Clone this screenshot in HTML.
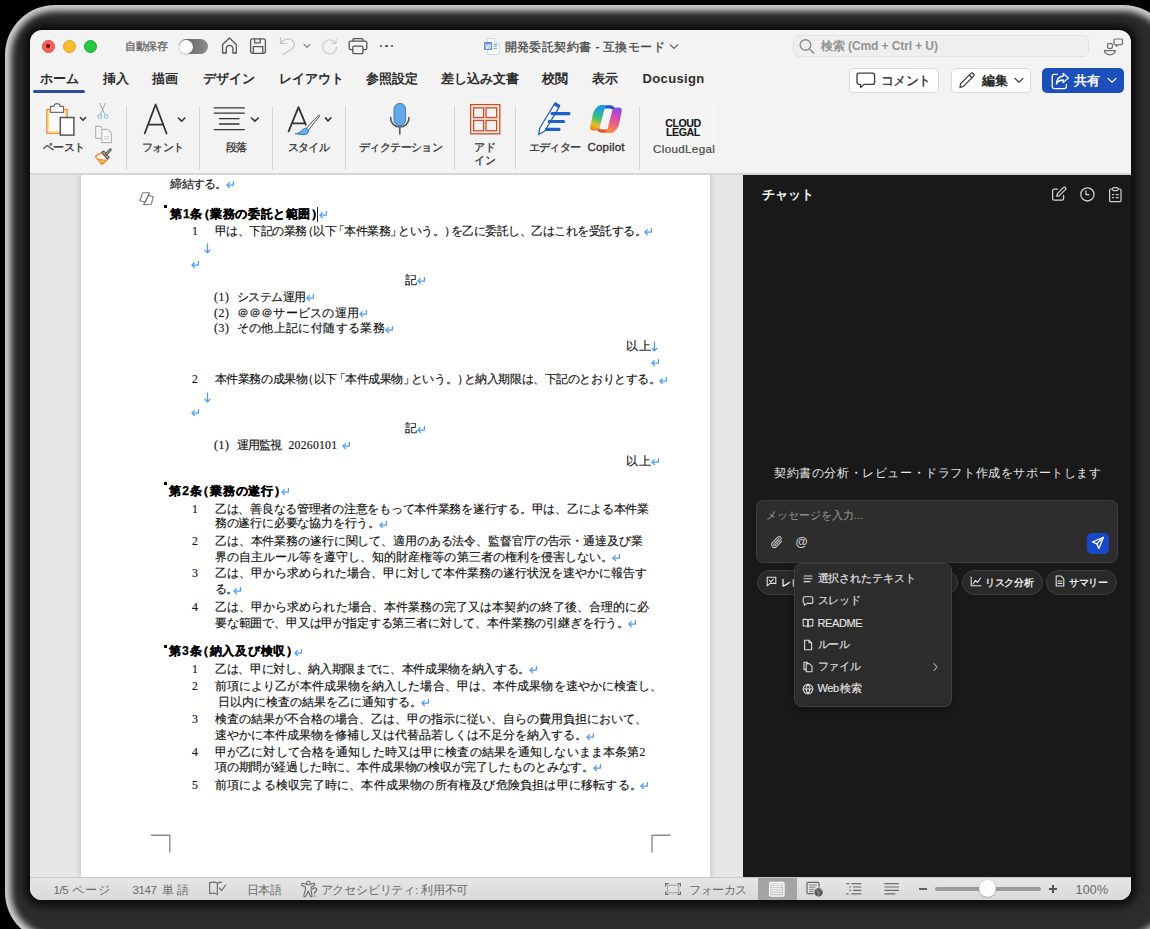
<!DOCTYPE html>
<html><head><meta charset="utf-8">
<style>
*{margin:0;padding:0;box-sizing:border-box}
html,body{width:1150px;height:929px;overflow:hidden;background:#000;font-family:"Liberation Sans",sans-serif}
.a{position:absolute}
#halo{left:5px;top:5px;width:1168px;height:937px;border-radius:50px;background:#2c2c2c;box-shadow:inset 0 0 6px 6px #d0d0d0}
#core{left:30px;top:30px;width:1101px;height:870px;border-radius:12px;box-shadow:0 0 9px 6px #0c0c0c}
#win{left:30px;top:30px;width:1101px;height:870px;border-radius:12px;overflow:hidden;background:#f3f3f3}
#doc{left:0;top:144px;width:713px;height:703px;background:#e7e7e7;overflow:hidden}
#page{left:51px;top:0;width:629px;height:703px;background:#fff;box-shadow:0 0 5px 1px rgba(0,0,0,.16)}
#chat{left:713px;top:144px;width:388px;height:703px;background:#191919}
#status{left:0;top:847px;width:1101px;height:23px;background:linear-gradient(#e6e6e6,#d9d9d9);border-top:1px solid #c9c9c9}
.t{position:absolute;white-space:nowrap;line-height:1}
.sep{top:105.5px;width:1px;height:64.5px;background:#d6d6d6}
.rl{font-size:10.5px;letter-spacing:-0.6px;color:#333;text-align:justify;text-align-last:justify;-webkit-text-stroke:0.3px #333}
.dl{position:absolute;white-space:nowrap;font-family:"Liberation Serif",serif;font-size:11.8px;letter-spacing:-0.8px;line-height:16px;color:#111;-webkit-text-stroke:0.15px #111;text-align:justify;text-align-last:justify;overflow:visible}
.db{font-weight:bold;color:#000;font-family:"Liberation Sans",sans-serif;font-size:12.2px;-webkit-text-stroke:0.25px #000}
.nj{text-align:left;text-align-last:auto;width:auto!important}
.pill{top:569.5px;height:25px;border-radius:13px;background:#292929;border:1px solid #3e3e3e}
.pt{font-size:10px;letter-spacing:-0.3px;font-weight:bold;color:#e8e8e8;margin-top:1.2px}
.mi{font-size:11px;letter-spacing:-0.4px;color:#e2e2e2;-webkit-text-stroke:0.15px #e2e2e2;text-align:justify;text-align-last:justify}
.st{font-size:11.5px;color:#6a6a6a;text-align:justify;text-align-last:justify;letter-spacing:-0.4px}
.ob{margin-left:-0.42em}.cb{margin-right:-0.42em}.ob2{margin-left:-0.3em}.cb2{margin-right:-0.3em}
.tab{font-size:13px;font-weight:bold;color:#2e2e2e;text-align:justify;text-align-last:justify}
</style></head><body>
<div id="halo" class="a"></div>
<div id="core" class="a"></div>
<div id="win" class="a">
  <div id="doc" class="a">
    <div id="page" class="a"></div>
  </div>
  <div id="chat" class="a"></div>
  <div id="status" class="a"></div>
</div>

<div class="a" id="ui" style="left:0;top:0;width:1150px;height:929px">
<!-- traffic lights -->
<div class="a" style="left:41.5px;top:39.5px;width:13px;height:13px;border-radius:50%;background:#ff5f57;border:0.5px solid #e2463f"></div>
<div class="a" style="left:46px;top:44px;width:4px;height:4px;border-radius:50%;background:#5a0a05"></div>
<div class="a" style="left:62.8px;top:39.5px;width:13px;height:13px;border-radius:50%;background:#febc2e;border:0.5px solid #dfa023"></div>
<div class="a" style="left:84px;top:39.5px;width:13px;height:13px;border-radius:50%;background:#28c840;border:0.5px solid #1aab29"></div>
<div class="t" style="left:125.3px;top:40.5px;font-size:10.5px;color:#666;letter-spacing:-0.5px;width:41.2px;text-align:justify;text-align-last:justify;-webkit-text-stroke:0.3px #666">自動保存</div>
<div class="a" style="left:178.5px;top:39px;width:29.5px;height:15px;border-radius:8px;background:linear-gradient(90deg,#5c5c5c,#8c8c8c)"></div>
<div class="a" style="left:179px;top:39.5px;width:14px;height:14px;border-radius:50%;background:#fff;box-shadow:0 0.5px 1px rgba(0,0,0,.35)"></div>
<svg class="a" style="left:220px;top:36px" width="20" height="20" viewBox="0 0 20 20" fill="none" stroke="#555" stroke-width="1.3" stroke-linejoin="round"><path d="M2.6 8.5 L9.4 2 L16.3 8.5 V17 H12.9 V12.6 A3.3 3.3 0 0 0 6.3 12.6 V17 H2.6 Z"/></svg>
<svg class="a" style="left:249px;top:37px" width="18" height="18" viewBox="0 0 18 18" fill="none" stroke="#555" stroke-width="1.3" stroke-linejoin="round"><rect x="1.6" y="1.8" width="14.8" height="14.5" rx="2"/><path d="M5.6 1.8 V5.8 H11.2 V1.8"/><path d="M4.3 16.3 V9.6 H13.8 V16.3"/></svg>
<svg class="a" style="left:278px;top:36px" width="20" height="20" viewBox="0 0 20 20" fill="none" stroke="#c2c2c2" stroke-width="1.2" stroke-linecap="round" stroke-linejoin="round"><path d="M2.5 7.5 H8.2 M2.5 7.5 V1.8"/><path d="M2.6 7.4 C5 3 11 1.6 14.6 4.5 C17.6 7.2 16.5 10.5 14 13 L5 18.5"/></svg>
<svg class="a" style="left:302px;top:42px" width="10" height="8" viewBox="0 0 10 8" fill="none" stroke="#8a8a8a" stroke-width="1.2" stroke-linecap="round"><path d="M2 2.5 L5 5.5 L8 2.5"/></svg>
<svg class="a" style="left:320px;top:37px" width="19" height="19" viewBox="0 0 19 19" fill="none" stroke="#cdcdcd" stroke-width="1.2" stroke-linecap="round"><path d="M15.8 6.5 A7 7 0 1 0 16.6 10"/><path d="M16.2 1.8 V6.3 H11.8"/></svg>
<svg class="a" style="left:348px;top:37px" width="20" height="18" viewBox="0 0 20 18" fill="none" stroke="#555" stroke-width="1.3" stroke-linejoin="round"><path d="M5 4.2 V2.6 A1 1 0 0 1 6 1.6 H14 A1 1 0 0 1 15 2.6 V4.2"/><path d="M5 12.6 H2.6 A1.4 1.4 0 0 1 1.2 11.2 V5.6 A1.4 1.4 0 0 1 2.6 4.2 H17.4 A1.4 1.4 0 0 1 18.8 5.6 V11.2 A1.4 1.4 0 0 1 17.4 12.6 H15"/><rect x="4.8" y="9.2" width="10.2" height="7.4" rx="1.3"/></svg>
<div class="a" style="left:379.6px;top:44.6px;width:2.6px;height:2.6px;border-radius:50%;background:#444"></div>
<div class="a" style="left:385.2px;top:44.6px;width:2.6px;height:2.6px;border-radius:50%;background:#444"></div>
<div class="a" style="left:390.8px;top:44.6px;width:2.6px;height:2.6px;border-radius:50%;background:#444"></div>
<!-- word icon -->
<svg class="a" style="left:483px;top:37px" width="18" height="19" viewBox="0 0 18 19"><path d="M4.5 1.5 H11.5 L16.5 6.5 V17.5 H4.5 Z" fill="#fff" stroke="#cfcfcf" stroke-width="0.8"/><path d="M11.5 1.5 V6.5 H16.5" fill="#f0f0f0" stroke="#cfcfcf" stroke-width="0.6"/><rect x="1" y="5" width="8.2" height="8" rx="0.6" fill="#6a93d8"/><text x="5.1" y="11.6" font-size="6.5" font-family="Liberation Sans" font-weight="bold" fill="#fff" text-anchor="middle">W</text><path d="M10.5 7.4 H14 M10.5 9.3 H14 M10.5 11.4 H14" stroke="#5aa0e8" stroke-width="1"/></svg>
<div class="t" style="left:504.5px;top:40.5px;font-size:12px;color:#4a4a4a;letter-spacing:-0.3px;width:160px;text-align:justify;text-align-last:justify;-webkit-text-stroke:0.3px #4a4a4a">開発委託契約書 - 互換モード</div>
<svg class="a" style="left:668px;top:42px" width="12" height="9" viewBox="0 0 12 9" fill="none" stroke="#6a6a6a" stroke-width="1.2" stroke-linecap="round"><path d="M2.2 2.8 L6 6.4 L9.8 2.8"/></svg>
<!-- search -->
<div class="a" style="left:793px;top:35px;width:296px;height:22px;border-radius:6px;background:#efefef;border:1px solid #e3e3e3"></div>
<svg class="a" style="left:798px;top:38px" width="18" height="17" viewBox="0 0 18 17" fill="none" stroke="#8a8a8a" stroke-width="1.4" stroke-linecap="round"><circle cx="7.5" cy="7" r="5.3"/><path d="M11.4 10.9 L15.8 15.2"/></svg>
<div class="t" style="left:821px;top:40px;font-size:12px;color:#939393;font-weight:bold;letter-spacing:-0.1px">検索 (Cmd + Ctrl + U)</div>
<svg class="a" style="left:1102px;top:36px" width="22" height="21" viewBox="0 0 22 21" fill="none" stroke="#707070" stroke-width="1.2" stroke-linejoin="round"><circle cx="8" cy="10" r="2.6"/><path d="M2.4 14.6 H13.4 A5.5 4.2 0 0 1 2.4 14.6 Z"/><path d="M13 3 H19.5 A1 1 0 0 1 20.5 4 V7.6 A1 1 0 0 1 19.5 8.6 H16.6 L14.4 10.4 V8.6 H13 A1 1 0 0 1 12 7.6 V4 A1 1 0 0 1 13 3 Z"/></svg>

<!-- tabs -->
<div class="t tab" style="left:39.7px;top:71.5px;width:37.3px">ホーム</div>
<div class="t tab" style="left:103px;top:71.5px;width:25.0px">挿入</div>
<div class="t tab" style="left:152.4px;top:71.5px;width:25.4px">描画</div>
<div class="t tab" style="left:202.9px;top:71.5px;width:49.1px">デザイン</div>
<div class="t tab" style="left:278.7px;top:71.5px;width:60.9px">レイアウト</div>
<div class="t tab" style="left:365.7px;top:71.5px;width:50.3px">参照設定</div>
<div class="t tab" style="left:441px;top:71.5px;width:75.7px">差し込み文書</div>
<div class="t tab" style="left:541.7px;top:71.5px;width:25.1px">校閲</div>
<div class="t tab" style="left:591.5px;top:71.5px;width:25.0px">表示</div>
<div class="t tab" style="left:642.6px;top:71.5px;width:60.9px;letter-spacing:0.35px">Docusign</div>
<div class="a" style="left:33px;top:89.5px;width:52px;height:3px;border-radius:1.5px;background:#2a4f9b"></div>

<div class="a" style="left:848.5px;top:67.5px;width:90px;height:25px;border-radius:5px;background:#fff;border:1px solid #dadada"></div>
<svg class="a" style="left:855px;top:71px" width="22" height="19" viewBox="0 0 22 19" fill="none" stroke="#3a3a3a" stroke-width="1.3" stroke-linejoin="round"><path d="M4 2.2 H17.6 A2 2 0 0 1 19.6 4.2 V11.4 A2 2 0 0 1 17.6 13.4 H9 L5.6 16.6 V13.4 H4 A2 2 0 0 1 2 11.4 V4.2 A2 2 0 0 1 4 2.2 Z"/></svg>
<div class="t" style="left:880.5px;top:73.5px;font-size:13px;color:#2a2a2a;width:50px;letter-spacing:-0.5px;text-align:justify;text-align-last:justify;-webkit-text-stroke:0.3px #2a2a2a">コメント</div>
<div class="a" style="left:950.5px;top:67.5px;width:80px;height:25px;border-radius:5px;background:#fff;border:1px solid #dadada"></div>
<svg class="a" style="left:957px;top:71px" width="20" height="19" viewBox="0 0 20 19" fill="none" stroke="#3a3a3a" stroke-width="1.3" stroke-linejoin="round"><path d="M3 16.5 L3.6 12.6 L13.6 2.6 A1.9 1.9 0 0 1 16.4 5.4 L6.4 15.4 Z"/><path d="M12.2 4 L15 6.8"/></svg>
<div class="t" style="left:981.5px;top:73.5px;font-size:13px;color:#2a2a2a;font-weight:bold;width:26px;text-align:justify;text-align-last:justify">編集</div>
<svg class="a" style="left:1013px;top:76px" width="12" height="9" viewBox="0 0 12 9" fill="none" stroke="#3a3a3a" stroke-width="1.3" stroke-linecap="round"><path d="M2 2.4 L6 6.2 L10 2.4"/></svg>
<div class="a" style="left:1042px;top:67.5px;width:81.5px;height:25px;border-radius:5px;background:#1c4fba"></div>
<svg class="a" style="left:1050px;top:70.5px" width="21" height="20" viewBox="0 0 21 20" fill="none" stroke="#fff" stroke-width="1.3" stroke-linejoin="round" stroke-linecap="round"><path d="M7.2 3.4 H4.2 A2 2 0 0 0 2.2 5.4 V15.6 A2 2 0 0 0 4.2 17.6 H14.4 A2 2 0 0 0 16.4 15.6 V13.4"/><path d="M13.2 2.4 L18.4 7 L13.2 11.6 V9 C10 9 7.6 10.4 6.4 13 C6.6 8.6 9.2 5.4 13.2 5 Z"/></svg>
<div class="t" style="left:1074px;top:73.5px;font-size:13px;color:#fff;font-weight:bold;width:26px;text-align:justify;text-align-last:justify">共有</div>
<svg class="a" style="left:1106px;top:76px" width="12" height="9" viewBox="0 0 12 9" fill="none" stroke="#fff" stroke-width="1.3" stroke-linecap="round"><path d="M2 2.4 L6 6.2 L10 2.4"/></svg>

<!-- ribbon -->
<div class="a" style="left:30px;top:173px;width:1101px;height:1.5px;background:#d6d6d6"></div>
<div class="a sep" style="left:125.5px"></div><div class="a sep" style="left:199px"></div><div class="a sep" style="left:272px"></div><div class="a sep" style="left:345px"></div><div class="a sep" style="left:453.5px"></div><div class="a sep" style="left:515px"></div><div class="a sep" style="left:639px"></div>
<svg class="a" style="left:40px;top:98px" width="80" height="72" viewBox="0 0 80 72">
 <rect x="6.9" y="11.6" width="20.2" height="23.6" fill="#fff" stroke="#f08a2c" stroke-width="1.4"/>
 <path d="M8.6 13.6 H25.4 V33.6 H8.6 Z" fill="none" stroke="#fddc8a" stroke-width="1.4"/>
 <rect x="9.8" y="13.4" width="14.6" height="19.6" fill="#fafafa"/>
 <path d="M10.5 8.4 H13.9 C14.3 5.6 15.6 5.6 17 5.6 C18.4 5.6 19.7 5.6 20.1 8.4 H23.5 V14.4 H10.5 Z" fill="#fff" stroke="#707070" stroke-width="1.2" stroke-linejoin="round"/>
 <rect x="20.3" y="19.5" width="13.6" height="17.6" fill="#fff" stroke="#555" stroke-width="1.5"/>
 <path d="M40.4 19.6 L43 22.3 L45.6 19.6" fill="none" stroke="#333" stroke-width="1.5" stroke-linecap="round" stroke-linejoin="round"/>
 <path d="M59.5 5 L64.6 16 M65.6 5 L60.5 16" stroke="#9a9a9a" stroke-width="0.9" fill="none"/>
 <circle cx="59.9" cy="18.4" r="1.8" fill="none" stroke="#8cc0e8" stroke-width="1.1"/><circle cx="66.2" cy="18.4" r="1.8" fill="none" stroke="#8cc0e8" stroke-width="1.1"/>
 <path d="M62 40.4 H55.6 V28.4 H60.2 L62 30.2" fill="none" stroke="#b5b5b5" stroke-width="1.1"/>
 <path d="M61.8 31.4 H67.6 L71.4 35.2 V44.6 H61.8 Z" fill="#f7f7f7" stroke="#b5b5b5" stroke-width="1.1"/>
 <path d="M63.8 38.6 H69.4 M63.8 40.8 H69.4" stroke="#c8c8c8" stroke-width="0.8"/>
 <path d="M55.4 58.4 L61.7 54.6 L67.4 61.4 L62 66.3 Z" fill="#fff" stroke="#f0862a" stroke-width="1.3" stroke-linejoin="round"/>
 <path d="M57.6 61.2 L66.4 62.3 L62 66 Z" fill="#f7c35a" stroke="#f0862a" stroke-width="1.1" stroke-linejoin="round"/>
 <path d="M62 54.3 L63.8 53 L69.2 59.3 L67.4 61 Z" fill="#bbb" stroke="#555" stroke-width="1.1" stroke-linejoin="round"/>
 <path d="M66.2 56.2 L70.4 51.8" stroke="#555" stroke-width="2.8" stroke-linecap="round"/>
 <path d="M66.4 56 L70.3 52" stroke="#ccc" stroke-width="0.9" stroke-linecap="round"/>
</svg>
<div class="t rl" style="left:43px;top:142px;width:39.5px">ペースト</div>
<svg class="a" style="left:135px;top:98px" width="60" height="42" viewBox="0 0 60 42" fill="none" stroke="#333" stroke-width="1.8" stroke-linecap="round" stroke-linejoin="round">
 <path d="M9.7 35.5 L20.6 6.5 L31.6 35.5"/><path d="M14 26.6 H27.4"/>
 <path d="M43.3 20 L46.7 23.2 L49.8 20" stroke-width="1.6"/>
</svg>
<div class="t rl" style="left:142px;top:142px;width:39px">フォント</div>
<svg class="a" style="left:205px;top:98px" width="60" height="42" viewBox="0 0 60 42" fill="none" stroke="#333" stroke-width="1.3" stroke-linecap="round">
 <path d="M9.2 9.9 H39.3 M9.2 15.1 H39.3 M14.4 20.7 H34 M14.4 26 H34 M9.2 31.6 H39.3"/>
 <path d="M46.5 20 L49.9 23.2 L53.3 20" stroke-width="1.6" stroke-linejoin="round"/>
</svg>
<div class="t rl" style="left:225.5px;top:142px;width:20.5px">段落</div>
<svg class="a" style="left:280px;top:98px" width="60" height="42" viewBox="0 0 60 42" fill="none" stroke-linecap="round" stroke-linejoin="round">
 <path d="M8.6 33.4 L18.5 9.1 L25.8 26.6" stroke="#333" stroke-width="1.8"/><path d="M13.3 25.3 H25.2" stroke="#333" stroke-width="1.8"/>
 <path d="M26.2 30.8 C30 26 35.5 20 38.4 17.6 C39.6 16.8 40 17.6 39.2 18.8 C36.5 22 32 27 28.4 32.4 Z" fill="#fff" stroke="#333" stroke-width="0.9"/>
 <path d="M15.4 35.6 C20 36.4 27.8 38.4 28.6 33 C28.4 30.8 26.4 29.6 24.6 30.4 C21.8 31.6 20.6 35.4 15.4 35.6 Z" fill="#6aaae6" stroke="#2a6fc0" stroke-width="0.9"/>
 <path d="M45.4 19.8 L48 23 L50.9 19.8" stroke="#333" stroke-width="1.6"/>
</svg>
<div class="t rl" style="left:287.5px;top:142px;width:41px">スタイル</div>
<svg class="a" style="left:385px;top:98px" width="30" height="42" viewBox="0 0 30 42" fill="none">
 <rect x="9" y="5.4" width="11.6" height="22.2" rx="5.8" fill="#64a8e8" stroke="#3b7cc8" stroke-width="1"/>
 <path d="M5.6 19.6 C5.6 32 24 32 24 19.6" stroke="#555" stroke-width="1.5" stroke-linecap="round"/>
 <path d="M14.8 29.6 V36.4" stroke="#555" stroke-width="1.6"/>
</svg>
<div class="t rl" style="left:359px;top:142px;width:81.5px">ディクテーション</div>
<svg class="a" style="left:465px;top:98px" width="40" height="42" viewBox="0 0 40 42" fill="none" stroke="#d24b22" stroke-width="1.3">
 <rect x="5.6" y="6.6" width="29.2" height="29.2"/>
 <rect x="8.6" y="9.8" width="10" height="9.8"/><rect x="21" y="9.8" width="10.6" height="9.8"/>
 <rect x="8.6" y="22.4" width="10" height="10.4"/><rect x="21" y="22.4" width="10.6" height="10.4"/>
</svg>
<div class="t rl" style="left:474px;top:142px;width:21.5px">アド</div>
<div class="t rl" style="left:474px;top:154.5px;width:21.5px">イン</div>
<svg class="a" style="left:535px;top:98px" width="40" height="42" viewBox="0 0 40 42">
 <path d="M3.6 36.5 L4.8 30 L19.4 6 L24.2 8.8 L9.8 33 Z" fill="#fff" stroke="#1f5fc8" stroke-width="1.3" stroke-linejoin="round"/>
 <path d="M18.6 7.2 L20.2 4.6 L25 7.4 L23.4 10" fill="#1f5fc8" stroke="#1f5fc8" stroke-width="1"/>
 <path d="M17 15.6 H34 M14.2 23.5 H28.6 M11.5 31.4 H24" stroke="#1f5fc8" stroke-width="3.2" stroke-linecap="round"/>
</svg>
<div class="t rl" style="left:528.5px;top:142px;width:51.5px">エディター</div>
<svg class="a" style="left:588px;top:103px" width="36" height="32" viewBox="0 0 36 32">
 <defs>
  <linearGradient id="cg1" x1="0.3" y1="0" x2="0.1" y2="1"><stop offset="0" stop-color="#1f9bf0"/><stop offset="0.45" stop-color="#3cbf7a"/><stop offset="0.75" stop-color="#e8c020"/><stop offset="1" stop-color="#f06a28"/></linearGradient>
  <linearGradient id="cg2" x1="0.7" y1="0" x2="0.4" y2="1"><stop offset="0" stop-color="#8a4ce0"/><stop offset="0.45" stop-color="#e04ca8"/><stop offset="1" stop-color="#f8903a"/></linearGradient>
 </defs>
 <path d="M12 2.2 H21.5 Q26 2.2 27.4 6 L26.5 9 Q25.5 5.4 21 5.4 H14 Z" fill="#2352d0"/>
 <path d="M24 29.8 H14.5 Q10 29.8 8.6 26 L9.5 23 Q10.5 26.6 15 26.6 H22 Z" fill="#e2542a"/>
 <path d="M8.6 4.6 Q10 2.2 12.8 2.2 H19.6 Q17.2 3.4 16.2 7 L12.2 22.6 Q11.2 27.6 6.8 27.6 H5.4 Q1.6 27.6 2.2 23.8 L4.6 12.4 Q5.8 7 8.6 4.6 Z" fill="url(#cg1)"/>
 <path d="M27.4 27.4 Q26 29.8 23.2 29.8 H16.4 Q18.8 28.6 19.8 25 L23.8 9.4 Q24.8 4.4 29.2 4.4 H30.6 Q34.4 4.4 33.8 8.2 L31.4 19.6 Q30.2 25 27.4 27.4 Z" fill="url(#cg2)"/>
</svg>
<div class="t rl" style="left:587.5px;top:142px;width:37px;font-family:'Liberation Sans',sans-serif;font-size:11.5px;letter-spacing:0.2px;-webkit-text-stroke:0.35px #333">Copilot</div>
<div class="a" style="left:650px;top:102px;width:65px;height:64px;background:#f5f5f5;border-radius:3px"></div>
<div class="t" style="left:660px;top:118.5px;width:46px;text-align:center;font-size:10.6px;font-weight:bold;color:#161616;line-height:9.4px;letter-spacing:-0.4px;-webkit-text-stroke:0.1px #161616">CLOUD<br>LEGAL</div>
<div class="t" style="left:653px;top:142.5px;width:61.5px;font-size:11.6px;color:#454545;letter-spacing:0.35px;text-align:justify;text-align-last:justify;-webkit-text-stroke:0.2px #454545">CloudLegal</div>

<!-- statusbar -->
<div class="t st" style="left:53.5px;top:885px;width:56.5px">1/5 ページ</div>
<div class="t st" style="left:132.5px;top:885px;width:56px">3147 単語</div>
<svg class="a" style="left:208px;top:880px" width="20" height="17" viewBox="0 0 20 17" fill="none" stroke="#6e6e6e" stroke-width="1.2" stroke-linejoin="round" stroke-linecap="round"><path d="M9.4 14.6 V3.2 C7.6 2 4.4 2 1.6 2.6 V13.6 C4.4 13 7.6 13.2 9.4 14.6"/><path d="M9.4 3.2 C10.6 2.4 12 2.2 13.6 2.2"/><path d="M11.4 8 L13.6 10.6 L17.6 5"/></svg>
<div class="t st" style="left:246.5px;top:885px;width:34px">日本語</div>
<svg class="a" style="left:296px;top:878px" width="30" height="22" viewBox="0 0 30 22" fill="none" stroke="#666" stroke-width="1.05" stroke-linejoin="round" stroke-linecap="round"><circle cx="12.4" cy="5.1" r="1.9"/><path d="M10.5 6.3 L7 5.4 C5.4 5.2 5 7.2 6.4 7.8 L9.4 9 L9.4 12.2 L7.8 17.4 C7.5 18.8 9.3 19.3 9.9 18 L12.3 13.2 L14.4 18 C14.9 19.1 16.3 18.8 16 17.5 L15.2 12.8 L15.2 9 L18 7.8 C19.2 7.1 18.8 5.2 17.3 5.4 L14.3 6.3"/><path d="M16.6 11.2 C16.8 9.6 20.8 9.4 20.8 11.6 C20.8 13 18.9 13.3 18.6 14.8 V15.6" stroke-width="1.3" stroke="#6a6a6a"/><circle cx="18.6" cy="18" r="0.7" fill="#6a6a6a" stroke="none"/></svg>
<div class="t st" style="left:320.5px;top:885px;width:147.5px">アクセシビリティ: 利用不可</div>
<svg class="a" style="left:664px;top:882px" width="18" height="14" viewBox="0 0 18 14" fill="none" stroke="#6e6e6e" stroke-width="1.2"><path d="M1.6 4.4 V1.6 H4.6 M13.4 1.6 H16.4 V4.4 M16.4 9.6 V12.4 H13.4 M4.6 12.4 H1.6 V9.6"/><rect x="3.4" y="3.2" width="11.2" height="7.6" rx="0.6" stroke-width="0.9" stroke="#9a9a9a"/></svg>
<div class="t st" style="left:689px;top:885px;width:57px">フォーカス</div>
<div class="a" style="left:758px;top:877.5px;width:38.7px;height:22.5px;background:#a4a4a4"></div>
<svg class="a" style="left:768px;top:881px" width="18" height="17" viewBox="0 0 18 17" fill="none"><rect x="1.6" y="1.5" width="14.4" height="13.6" rx="1.4" fill="#c8c8c8" stroke="#fff" stroke-width="1.3"/><path d="M3.4 3.6 H14.2 M3.4 5.6 H14.2 M3.4 7.8 H14.2 M3.4 10 H14.2 M3.4 12.3 H14.2" stroke="#fff" stroke-width="0.9"/></svg>
<svg class="a" style="left:805px;top:880px" width="21" height="18" viewBox="0 0 21 18" fill="none"><rect x="2" y="2.4" width="12" height="11.2" rx="1" fill="#e4e4e4" stroke="#666" stroke-width="1.2"/><path d="M4 5 H12 M4 7.2 H10.5 M4 9.4 H9.5 M4 11.4 H9" stroke="#777" stroke-width="0.9"/><circle cx="13.6" cy="12.3" r="4.6" fill="#5a5a5a" stroke="#e4e4e4" stroke-width="0.8"/><path d="M11.4 9.6 C12.6 10.4 12.4 11.6 13.4 12 C14.4 12.4 14 14 13.2 15.6 M15 8.8 C15.6 9.8 16.6 10 17.4 10.4" stroke="#bbb" stroke-width="0.8" fill="none"/></svg>
<svg class="a" style="left:845px;top:881px" width="18" height="16" viewBox="0 0 18 16" fill="none" stroke="#6e6e6e" stroke-width="1.2"><path d="M1.4 2.6 H4.4 M6.4 2.6 H16.4 M4.4 6 H6 M8 6 H16.4 M4.4 9.4 H6 M8 9.4 H16.4 M1.4 12.8 H3.6 M6.4 12.8 H16.4"/></svg>
<svg class="a" style="left:883px;top:881px" width="18" height="16" viewBox="0 0 18 16" fill="none" stroke="#6e6e6e" stroke-width="1.2"><path d="M1.4 2.6 H16 M1.4 6 H16 M1.4 9.4 H16 M1.4 12.8 H12.4"/></svg>
<div class="a" style="left:919px;top:888px;width:8px;height:2.2px;background:#606060"></div>
<div class="a" style="left:935px;top:887px;width:105.5px;height:4px;border-radius:2px;background:#9c9c9c"></div>
<div class="a" style="left:979.3px;top:880.3px;width:17px;height:17px;border-radius:50%;background:#fff;box-shadow:0 0.5px 1.5px rgba(0,0,0,.4)"></div>
<div class="a" style="left:1048.6px;top:888px;width:8.4px;height:2.2px;background:#555"></div>
<div class="a" style="left:1051.7px;top:884.9px;width:2.2px;height:8.4px;background:#555"></div>
<div class="t st" style="left:1075.5px;top:883.5px;font-size:12.5px;width:32.5px;letter-spacing:0.2px;font-family:'Liberation Sans',sans-serif">100%</div>

<!-- chat -->
<div class="t" style="left:762px;top:189px;font-size:12.5px;font-weight:bold;color:#f2f2f2;width:49px;text-align:justify;text-align-last:justify">チャット</div>
<svg class="a" style="left:1051px;top:186px" width="17" height="16" viewBox="0 0 17 16" fill="none" stroke="#cfcfcf" stroke-width="1.3" stroke-linecap="round" stroke-linejoin="round"><path d="M6.4 3.2 H3.2 A1.6 1.6 0 0 0 1.6 4.8 V12.6 A1.6 1.6 0 0 0 3.2 14.2 H11 A1.6 1.6 0 0 0 12.6 12.6 V9.4"/><path d="M5.8 10.4 L6.4 7.6 L12.4 1.6 A1.4 1.4 0 0 1 14.4 3.6 L8.4 9.6 Z"/></svg>
<svg class="a" style="left:1079px;top:186px" width="17" height="17" viewBox="0 0 17 17" fill="none" stroke="#cfcfcf" stroke-width="1.3" stroke-linecap="round"><circle cx="8.4" cy="8.4" r="6.6"/><path d="M7 4.8 V8.6 H10"/></svg>
<svg class="a" style="left:1108px;top:186px" width="15" height="17" viewBox="0 0 15 17" fill="none" stroke="#cfcfcf" stroke-width="1.2" stroke-linecap="round" stroke-linejoin="round"><path d="M4.4 3 H2.8 A1.2 1.2 0 0 0 1.6 4.2 V14.4 A1.2 1.2 0 0 0 2.8 15.6 H11.8 A1.2 1.2 0 0 0 13 14.4 V4.2 A1.2 1.2 0 0 0 11.8 3 H10.2"/><rect x="4.6" y="1.6" width="5.4" height="3" rx="1.2"/><path d="M4.6 8.6 H5.6 M8.2 8.6 H10.2 M4.6 11.6 H5.6 M8.2 11.6 H10.2" stroke-width="1.4"/></svg>
<div class="t" style="left:774px;top:466.5px;font-size:12px;letter-spacing:-0.5px;color:#e6e6e6;width:326.5px;text-align:justify;text-align-last:justify">契約書の分析・レビュー・ドラフト作成をサポートします</div>
<div class="a" style="left:756px;top:500px;width:362px;height:62.5px;border-radius:7px;background:#2d2d2d;border:1px solid #3c3c3c"></div>
<div class="t" style="left:766px;top:510px;font-size:11px;color:#9a9a9a;width:96px;text-align:justify;text-align-last:justify">メッセージを入力...</div>
<svg class="a" style="left:770px;top:535px" width="14" height="15" viewBox="0 0 14 15" fill="none" stroke="#bdbdbd" stroke-width="1.2" stroke-linecap="round"><path d="M11.6 6.4 L6.4 11.6 A2.8 2.8 0 0 1 2.4 7.6 L7.8 2.2 A1.9 1.9 0 0 1 10.5 4.9 L5.3 10.1 A0.9 0.9 0 0 1 4 8.8 L8.8 4"/></svg>
<div class="t" style="left:795.5px;top:536px;font-size:12.5px;color:#c8c8c8;font-weight:bold">@</div>
<div class="a" style="left:1087px;top:532.5px;width:22px;height:21px;border-radius:5px;background:#1848c8"></div>
<svg class="a" style="left:1090px;top:535px" width="16" height="16" viewBox="0 0 16 16" fill="none" stroke="#fff" stroke-width="1.3" stroke-linejoin="round" stroke-linecap="round"><path d="M13.4 2.4 L2.4 7 L6.8 8.8 L8.8 13.4 Z"/><path d="M6.8 8.8 L13.4 2.4"/></svg>
<!-- pills -->
<div class="a pill" style="left:757px;top:569.5px;width:96px"></div>
<svg class="a" style="left:766px;top:576px" width="11" height="11" viewBox="0 0 11 11" fill="none" stroke="#e0e0e0" stroke-width="1.1" stroke-linejoin="round"><path d="M1.2 1.2 H9.8 V7.4 H4 L1.2 9.8 Z"/><path d="M3.4 4.4 L4.8 5.8 L7.4 3.2" stroke-linecap="round"/></svg>
<div class="t pt" style="left:781px;top:577px">レビュー</div>
<div class="a pill" style="left:857px;top:569.5px;width:101px"></div>
<div class="a pill" style="left:962px;top:569.5px;width:81px"></div>
<svg class="a" style="left:970px;top:576px" width="12" height="11" viewBox="0 0 12 11" fill="none" stroke="#e0e0e0" stroke-width="1.1" stroke-linejoin="round" stroke-linecap="round"><path d="M1.2 1 V9.8 H11"/><path d="M3 8 L5.4 4.4 L7.4 6.4 L10.4 2.2"/></svg>
<div class="t pt" style="left:985px;top:577px;width:47.5px;text-align:justify;text-align-last:justify">リスク分析</div>
<div class="a pill" style="left:1046px;top:569.5px;width:71px"></div>
<svg class="a" style="left:1055px;top:575px" width="10" height="12" viewBox="0 0 10 12" fill="none" stroke="#e0e0e0" stroke-width="1.1" stroke-linejoin="round"><path d="M1.2 1 H6 L8.8 3.8 V11 H1.2 Z"/><path d="M3 6 H7 M3 8.4 H7" stroke-linecap="round"/></svg>
<div class="t pt" style="left:1069px;top:577px;width:38px;text-align:justify;text-align-last:justify">サマリー</div>
<!-- dropdown -->
<div class="a" style="left:794px;top:562.5px;width:157.5px;height:144px;border-radius:7px;background:#2c2c2c;border:1px solid #3e3e3e;box-shadow:0 2px 6px rgba(0,0,0,.35)"></div>
<svg class="a" style="left:802px;top:573px" width="12" height="12" viewBox="0 0 12 12" fill="none" stroke="#dcdcdc" stroke-width="1.1" stroke-linecap="round"><path d="M2 3 H10 M2 5.8 H10 M2 8.6 H8"/></svg>
<div class="t mi" style="left:817.5px;top:572.5px;width:98px">選択されたテキスト</div>
<svg class="a" style="left:802px;top:595px" width="12" height="12" viewBox="0 0 12 12" fill="none" stroke="#dcdcdc" stroke-width="1.1" stroke-linejoin="round"><path d="M2.6 1.8 H9.4 A1.4 1.4 0 0 1 10.8 3.2 V7 A1.4 1.4 0 0 1 9.4 8.4 H5 L2.4 10.4 V8.2 A1.4 1.4 0 0 1 1.2 7 V3.2 A1.4 1.4 0 0 1 2.6 1.8 Z"/><path d="M4 5.2 H4.2 M6 5.2 H6.2 M8 5.2 H8.2" stroke-width="1.2"/></svg>
<div class="t mi" style="left:817.5px;top:594.5px;width:43px">スレッド</div>
<svg class="a" style="left:802px;top:617px" width="12" height="12" viewBox="0 0 12 12" fill="none" stroke="#dcdcdc" stroke-width="1.1" stroke-linejoin="round"><path d="M1.2 2.4 H4.2 A1.8 1.8 0 0 1 6 4.2 V10 A1.8 1.8 0 0 0 4.2 9 H1.2 Z"/><path d="M10.8 2.4 H7.8 A1.8 1.8 0 0 0 6 4.2 V10 A1.8 1.8 0 0 1 7.8 9 H10.8 Z"/></svg>
<div class="t mi" style="left:817.5px;top:617.5px;width:42px">README</div>
<svg class="a" style="left:802px;top:639px" width="12" height="12" viewBox="0 0 12 12" fill="none" stroke="#dcdcdc" stroke-width="1.1" stroke-linejoin="round"><path d="M2.6 1.2 H7 L9.6 3.8 V10.8 H2.6 Z"/><path d="M7 1.2 V3.8 H9.6"/></svg>
<div class="t mi" style="left:817.5px;top:638.5px;width:32px">ルール</div>
<svg class="a" style="left:802px;top:661px" width="12" height="12" viewBox="0 0 12 12" fill="none" stroke="#dcdcdc" stroke-width="1.1" stroke-linejoin="round"><path d="M4.2 2.6 H7.4 L10 5.2 V10.8 H4.2 Z"/><path d="M4.2 8.6 H2 V1.2 H6"/></svg>
<div class="t mi" style="left:817.5px;top:660.5px;width:43px">ファイル</div>
<svg class="a" style="left:932px;top:662px" width="7" height="10" viewBox="0 0 7 10" fill="none" stroke="#a8a8a8" stroke-width="1.1" stroke-linecap="round"><path d="M2 1.6 L5 5 L2 8.4"/></svg>
<svg class="a" style="left:802px;top:683px" width="12" height="12" viewBox="0 0 12 12" fill="none" stroke="#dcdcdc" stroke-width="1.1"><circle cx="6" cy="6" r="4.8"/><path d="M1.2 6 H10.8 M6 1.2 C3.6 3.6 3.6 8.4 6 10.8 M6 1.2 C8.4 3.6 8.4 8.4 6 10.8"/></svg>
<div class="t mi" style="left:817.5px;top:682.5px;width:44px">Web検索</div>

<!-- document -->
<div class="dl" style="left:170.4px;top:175.7px;width:55.1px">締結する。</div>
<svg class="a" style="left:225.5px;top:180.9px" width="9" height="8" viewBox="0 0 9 8" fill="none" stroke="#4c9cf4" stroke-width="1.25" stroke-linecap="round" stroke-linejoin="round"><path d="M7.4 0.6 V4 H1.2"/><path d="M3.4 1.6 L1 4 L3.4 6.5"/></svg>
<svg class="a" style="left:134px;top:186px" width="40" height="26" viewBox="0 0 40 26" fill="none" stroke="#7a7a7a" stroke-width="1.1" stroke-linejoin="round"><path d="M8.6 6.8 H15.4 L11.4 16.2 L5.8 14.8 Z"/><path d="M14.6 8.9 L19.3 11 L17.3 18.2 L9.6 18.6 Z"/></svg>
<div class="a" style="left:163.6px;top:205.2px;width:3.2px;height:3.3px;background:#000"></div>
<div class="dl db" style="left:170.4px;top:205.7px;width:146.6px">第1条<span class="ob">（</span>業務の委託と範囲<span class="cb">）</span></div>
<div class="a" style="left:317.2px;top:207px;width:1px;height:15px;background:#222"></div>
<svg class="a" style="left:318.5px;top:210.9px" width="9" height="8" viewBox="0 0 9 8" fill="none" stroke="#4c9cf4" stroke-width="1.25" stroke-linecap="round" stroke-linejoin="round"><path d="M7.4 0.6 V4 H1.2"/><path d="M3.4 1.6 L1 4 L3.4 6.5"/></svg>
<div class="dl nj" style="left:192.0px;top:223.4px;width:6.0px">1</div>
<div class="dl" style="left:214.8px;top:222.9px;width:431.2px">甲は、下記の業務<span class="ob">（</span>以下<span class="ob2">「</span>本件業務<span class="cb2">」</span>という。<span class="cb">）</span>を乙に委託し、乙はこれを受託する。</div>
<svg class="a" style="left:643.5px;top:228.1px" width="9" height="8" viewBox="0 0 9 8" fill="none" stroke="#4c9cf4" stroke-width="1.25" stroke-linecap="round" stroke-linejoin="round"><path d="M7.4 0.6 V4 H1.2"/><path d="M3.4 1.6 L1 4 L3.4 6.5"/></svg>
<svg class="a" style="left:204.1px;top:242.8px" width="7" height="11" viewBox="0 0 7 11" fill="none" stroke="#4c9cf4" stroke-width="1.25" stroke-linecap="round" stroke-linejoin="round"><path d="M3.5 0.8 V9.6"/><path d="M1 7.2 L3.5 9.8 L6 7.2"/></svg>
<svg class="a" style="left:191.3px;top:260.8px" width="9" height="8" viewBox="0 0 9 8" fill="none" stroke="#4c9cf4" stroke-width="1.25" stroke-linecap="round" stroke-linejoin="round"><path d="M7.4 0.6 V4 H1.2"/><path d="M3.4 1.6 L1 4 L3.4 6.5"/></svg>
<div class="dl" style="left:405.0px;top:272.2px;width:11.5px">記</div>
<svg class="a" style="left:417.0px;top:277.4px" width="9" height="8" viewBox="0 0 9 8" fill="none" stroke="#4c9cf4" stroke-width="1.25" stroke-linecap="round" stroke-linejoin="round"><path d="M7.4 0.6 V4 H1.2"/><path d="M3.4 1.6 L1 4 L3.4 6.5"/></svg>
<div class="dl nj" style="left:214.0px;top:288.9px;width:15.0px;letter-spacing:0.6px">(1)</div>
<div class="dl" style="left:236.5px;top:288.9px;width:69.0px">システム運用</div>
<svg class="a" style="left:306.0px;top:294.1px" width="9" height="8" viewBox="0 0 9 8" fill="none" stroke="#4c9cf4" stroke-width="1.25" stroke-linecap="round" stroke-linejoin="round"><path d="M7.4 0.6 V4 H1.2"/><path d="M3.4 1.6 L1 4 L3.4 6.5"/></svg>
<div class="dl nj" style="left:214.0px;top:304.6px;width:15.0px;letter-spacing:0.6px">(2)</div>
<div class="dl" style="left:236.5px;top:304.6px;width:121.5px">＠＠＠サービスの運用</div>
<svg class="a" style="left:359.0px;top:309.8px" width="9" height="8" viewBox="0 0 9 8" fill="none" stroke="#4c9cf4" stroke-width="1.25" stroke-linecap="round" stroke-linejoin="round"><path d="M7.4 0.6 V4 H1.2"/><path d="M3.4 1.6 L1 4 L3.4 6.5"/></svg>
<div class="dl nj" style="left:214.0px;top:320.4px;width:15.0px;letter-spacing:0.6px">(3)</div>
<div class="dl" style="left:236.5px;top:320.4px;width:147.5px">その他上記に付随する業務</div>
<svg class="a" style="left:384.5px;top:325.6px" width="9" height="8" viewBox="0 0 9 8" fill="none" stroke="#4c9cf4" stroke-width="1.25" stroke-linecap="round" stroke-linejoin="round"><path d="M7.4 0.6 V4 H1.2"/><path d="M3.4 1.6 L1 4 L3.4 6.5"/></svg>
<div class="dl" style="left:626.0px;top:338.4px;width:24.5px">以上</div>
<svg class="a" style="left:650.7px;top:341.3px" width="7" height="11" viewBox="0 0 7 11" fill="none" stroke="#4c9cf4" stroke-width="1.25" stroke-linecap="round" stroke-linejoin="round"><path d="M3.5 0.8 V9.6"/><path d="M1 7.2 L3.5 9.8 L6 7.2"/></svg>
<svg class="a" style="left:650.7px;top:359.2px" width="9" height="8" viewBox="0 0 9 8" fill="none" stroke="#4c9cf4" stroke-width="1.25" stroke-linecap="round" stroke-linejoin="round"><path d="M7.4 0.6 V4 H1.2"/><path d="M3.4 1.6 L1 4 L3.4 6.5"/></svg>
<div class="dl nj" style="left:192.0px;top:371.4px;width:6.0px">2</div>
<div class="dl" style="left:214.8px;top:371.4px;width:445.2px">本件業務の成果物<span class="ob">（</span>以下<span class="ob2">「</span>本件成果物<span class="cb2">」</span>という。<span class="cb">）</span>と納入期限は、下記のとおりとする。</div>
<svg class="a" style="left:659.0px;top:376.6px" width="9" height="8" viewBox="0 0 9 8" fill="none" stroke="#4c9cf4" stroke-width="1.25" stroke-linecap="round" stroke-linejoin="round"><path d="M7.4 0.6 V4 H1.2"/><path d="M3.4 1.6 L1 4 L3.4 6.5"/></svg>
<svg class="a" style="left:204.1px;top:391.8px" width="7" height="11" viewBox="0 0 7 11" fill="none" stroke="#4c9cf4" stroke-width="1.25" stroke-linecap="round" stroke-linejoin="round"><path d="M3.5 0.8 V9.6"/><path d="M1 7.2 L3.5 9.8 L6 7.2"/></svg>
<svg class="a" style="left:191.3px;top:409.4px" width="9" height="8" viewBox="0 0 9 8" fill="none" stroke="#4c9cf4" stroke-width="1.25" stroke-linecap="round" stroke-linejoin="round"><path d="M7.4 0.6 V4 H1.2"/><path d="M3.4 1.6 L1 4 L3.4 6.5"/></svg>
<div class="dl" style="left:405.0px;top:420.4px;width:11.5px">記</div>
<svg class="a" style="left:417.0px;top:425.6px" width="9" height="8" viewBox="0 0 9 8" fill="none" stroke="#4c9cf4" stroke-width="1.25" stroke-linecap="round" stroke-linejoin="round"><path d="M7.4 0.6 V4 H1.2"/><path d="M3.4 1.6 L1 4 L3.4 6.5"/></svg>
<div class="dl nj" style="left:214.0px;top:436.7px;width:15.0px;letter-spacing:0.6px">(1)</div>
<div class="dl" style="left:236.6px;top:436.7px;width:43.4px">運用監視</div>
<div class="dl nj" style="left:288.5px;top:436.7px;width:52.5px;letter-spacing:0.2px">20260101</div>
<svg class="a" style="left:341.5px;top:441.9px" width="9" height="8" viewBox="0 0 9 8" fill="none" stroke="#4c9cf4" stroke-width="1.25" stroke-linecap="round" stroke-linejoin="round"><path d="M7.4 0.6 V4 H1.2"/><path d="M3.4 1.6 L1 4 L3.4 6.5"/></svg>
<div class="dl" style="left:626.0px;top:452.8px;width:24.5px">以上</div>
<svg class="a" style="left:650.7px;top:458.0px" width="9" height="8" viewBox="0 0 9 8" fill="none" stroke="#4c9cf4" stroke-width="1.25" stroke-linecap="round" stroke-linejoin="round"><path d="M7.4 0.6 V4 H1.2"/><path d="M3.4 1.6 L1 4 L3.4 6.5"/></svg>
<div class="a" style="left:163.7px;top:481.9px;width:3px;height:3px;background:#000"></div>
<div class="dl db" style="left:169.4px;top:483.0px;width:110.6px">第2条<span class="ob">（</span>業務の遂行<span class="cb">）</span></div>
<svg class="a" style="left:281.0px;top:488.2px" width="9" height="8" viewBox="0 0 9 8" fill="none" stroke="#4c9cf4" stroke-width="1.25" stroke-linecap="round" stroke-linejoin="round"><path d="M7.4 0.6 V4 H1.2"/><path d="M3.4 1.6 L1 4 L3.4 6.5"/></svg>
<div class="dl nj" style="left:192.0px;top:500.9px;width:6.0px">1</div>
<div class="dl" style="left:214.9px;top:500.9px;width:433.5px">乙は、善良なる管理者の注意をもって本件業務を遂行する。甲は、乙による本件業</div>
<div class="dl" style="left:214.9px;top:515.4px;width:164.6px">務の遂行に必要な協力を行う。</div>
<svg class="a" style="left:378.5px;top:520.6px" width="9" height="8" viewBox="0 0 9 8" fill="none" stroke="#4c9cf4" stroke-width="1.25" stroke-linecap="round" stroke-linejoin="round"><path d="M7.4 0.6 V4 H1.2"/><path d="M3.4 1.6 L1 4 L3.4 6.5"/></svg>
<div class="dl nj" style="left:192.0px;top:533.2px;width:6.0px">2</div>
<div class="dl" style="left:214.9px;top:533.2px;width:427.0px">乙は、本件業務の遂行に関して、適用のある法令、監督官庁の告示・通達及び業</div>
<div class="dl" style="left:214.9px;top:548.7px;width:397.8px">界の自主ルール等を遵守し、知的財産権等の第三者の権利を侵害しない。</div>
<svg class="a" style="left:611.7px;top:553.9px" width="9" height="8" viewBox="0 0 9 8" fill="none" stroke="#4c9cf4" stroke-width="1.25" stroke-linecap="round" stroke-linejoin="round"><path d="M7.4 0.6 V4 H1.2"/><path d="M3.4 1.6 L1 4 L3.4 6.5"/></svg>
<div class="dl nj" style="left:192.0px;top:565.4px;width:6.0px">3</div>
<div class="dl" style="left:214.9px;top:565.4px;width:431.4px">乙は、甲から求められた場合、甲に対して本件業務の遂行状況を速やかに報告す</div>
<div class="dl" style="left:214.9px;top:581.4px;width:19.1px">る。</div>
<svg class="a" style="left:233.0px;top:586.6px" width="9" height="8" viewBox="0 0 9 8" fill="none" stroke="#4c9cf4" stroke-width="1.25" stroke-linecap="round" stroke-linejoin="round"><path d="M7.4 0.6 V4 H1.2"/><path d="M3.4 1.6 L1 4 L3.4 6.5"/></svg>
<div class="dl nj" style="left:192.0px;top:599.0px;width:6.0px">4</div>
<div class="dl" style="left:214.9px;top:599.0px;width:433.5px">乙は、甲から求められた場合、本件業務の完了又は本契約の終了後、合理的に必</div>
<div class="dl" style="left:214.9px;top:614.8px;width:413.6px">要な範囲で、甲又は甲が指定する第三者に対して、本件業務の引継ぎを行う。</div>
<svg class="a" style="left:627.5px;top:620.0px" width="9" height="8" viewBox="0 0 9 8" fill="none" stroke="#4c9cf4" stroke-width="1.25" stroke-linecap="round" stroke-linejoin="round"><path d="M7.4 0.6 V4 H1.2"/><path d="M3.4 1.6 L1 4 L3.4 6.5"/></svg>
<div class="a" style="left:163.7px;top:644.6px;width:3px;height:3px;background:#000"></div>
<div class="dl db" style="left:169.4px;top:643.4px;width:122.6px">第3条<span class="ob">（</span>納入及び検収<span class="cb">）</span></div>
<svg class="a" style="left:294.0px;top:648.6px" width="9" height="8" viewBox="0 0 9 8" fill="none" stroke="#4c9cf4" stroke-width="1.25" stroke-linecap="round" stroke-linejoin="round"><path d="M7.4 0.6 V4 H1.2"/><path d="M3.4 1.6 L1 4 L3.4 6.5"/></svg>
<div class="dl nj" style="left:192.0px;top:660.8px;width:6.0px">1</div>
<div class="dl" style="left:214.9px;top:660.8px;width:314.8px">乙は、甲に対し、納入期限までに、本件成果物を納入する。</div>
<svg class="a" style="left:528.7px;top:666.0px" width="9" height="8" viewBox="0 0 9 8" fill="none" stroke="#4c9cf4" stroke-width="1.25" stroke-linecap="round" stroke-linejoin="round"><path d="M7.4 0.6 V4 H1.2"/><path d="M3.4 1.6 L1 4 L3.4 6.5"/></svg>
<div class="dl nj" style="left:192.0px;top:678.2px;width:6.0px">2</div>
<div class="dl" style="left:214.9px;top:678.2px;width:446.6px">前項により乙が本件成果物を納入した場合、甲は、本件成果物を速やかに検査し、</div>
<div class="dl" style="left:217.5px;top:693.7px;width:204.0px">日以内に検査の結果を乙に通知する。</div>
<svg class="a" style="left:420.5px;top:698.9px" width="9" height="8" viewBox="0 0 9 8" fill="none" stroke="#4c9cf4" stroke-width="1.25" stroke-linecap="round" stroke-linejoin="round"><path d="M7.4 0.6 V4 H1.2"/><path d="M3.4 1.6 L1 4 L3.4 6.5"/></svg>
<div class="dl nj" style="left:192.0px;top:711.1px;width:6.0px">3</div>
<div class="dl" style="left:214.9px;top:711.1px;width:431.1px">検査の結果が不合格の場合、乙は、甲の指示に従い、自らの費用負担において、</div>
<div class="dl" style="left:214.9px;top:727.3px;width:371.6px">速やかに本件成果物を修補し又は代替品若しくは不足分を納入する。</div>
<svg class="a" style="left:585.5px;top:732.5px" width="9" height="8" viewBox="0 0 9 8" fill="none" stroke="#4c9cf4" stroke-width="1.25" stroke-linecap="round" stroke-linejoin="round"><path d="M7.4 0.6 V4 H1.2"/><path d="M3.4 1.6 L1 4 L3.4 6.5"/></svg>
<div class="dl nj" style="left:192.0px;top:743.7px;width:6.0px">4</div>
<div class="dl" style="left:214.9px;top:743.7px;width:429.6px">甲が乙に対して合格を通知した時又は甲に検査の結果を通知しないまま本条第2</div>
<div class="dl" style="left:214.9px;top:759.1px;width:378.6px">項の期間が経過した時に、本件成果物の検収が完了したものとみなす。</div>
<svg class="a" style="left:592.5px;top:764.3px" width="9" height="8" viewBox="0 0 9 8" fill="none" stroke="#4c9cf4" stroke-width="1.25" stroke-linecap="round" stroke-linejoin="round"><path d="M7.4 0.6 V4 H1.2"/><path d="M3.4 1.6 L1 4 L3.4 6.5"/></svg>
<div class="dl nj" style="left:192.0px;top:776.7px;width:6.0px">5</div>
<div class="dl" style="left:214.9px;top:776.7px;width:426.1px">前項による検収完了時に、本件成果物の所有権及び危険負担は甲に移転する。</div>
<svg class="a" style="left:640.0px;top:781.9px" width="9" height="8" viewBox="0 0 9 8" fill="none" stroke="#4c9cf4" stroke-width="1.25" stroke-linecap="round" stroke-linejoin="round"><path d="M7.4 0.6 V4 H1.2"/><path d="M3.4 1.6 L1 4 L3.4 6.5"/></svg>
<svg class="a" style="left:150px;top:834px" width="22" height="20" viewBox="0 0 22 20" fill="none" stroke="#8c8c8c" stroke-width="1.4"><path d="M1 1.2 H19.8 V18.6"/></svg>
<svg class="a" style="left:651px;top:834px" width="22" height="20" viewBox="0 0 22 20" fill="none" stroke="#8c8c8c" stroke-width="1.4"><path d="M1 18.6 V1.2 H19.6"/></svg>
<!-- /document -->

</div>
</body></html>
